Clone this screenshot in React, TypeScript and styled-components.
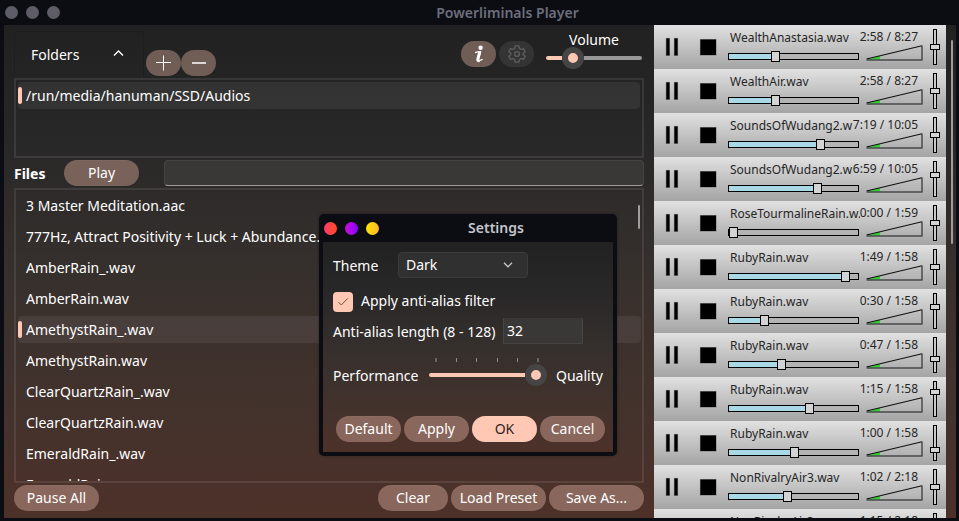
import React from "react";
import styled, { createGlobalStyle, css } from "styled-components";

const GlobalStyle = createGlobalStyle`
  * { box-sizing: border-box; }
  html, body { margin: 0; padding: 0; background: #0b0d13; overflow: hidden; }
  body { font-family: "Noto Sans", "Open Sans", sans-serif; font-size: 14px; font-weight: 450; color: #fff; }
`;

const Window = styled.div`
  position: relative;
  width: 959px;
  height: 521px;
  overflow: hidden;
  background: #0b0d13;
  display: flex;
  flex-direction: column;
`;

const TitleBar = styled.header<{ $height: number }>`
  height: ${(p) => p.$height}px;
  flex: none;
  display: grid;
  grid-template-columns: 60px 1fr 60px;
  align-items: center;
  padding: 0 5px;
`;

const Dots = styled.div`
  display: flex;
  gap: 8px;
`;

const Dot = styled.span<{ $fill: string }>`
  width: 13px;
  height: 13px;
  border-radius: 50%;
  background: ${(p) => p.$fill};
`;

const Title = styled.h1<{ $color: string; $spacing: number; $shift: number }>`
  margin: 0;
  padding-left: ${(p) => p.$shift}px;
  text-align: center;
  font-size: 14px;
  line-height: 18px;
  font-weight: 600;
  letter-spacing: ${(p) => p.$spacing}px;
  color: ${(p) => p.$color};
  white-space: nowrap;
`;

const Body = styled.main`
  height: 493px;
  margin: 0 3px 0 4px;
  display: flex;
  background: linear-gradient(#212121 0%, #292828 25%, #36302d 50%, #43322c 78%, #4d3129 100%);
`;

const Left = styled.section`
  width: 650px;
  padding: 6px 10px 0;
  display: flex;
  flex-direction: column;
`;

const TopRow = styled.div`
  height: 47px;
  flex: none;
  display: flex;
`;

const FolderCombo = styled.div`
  width: 130px;
  height: 47px;
  padding: 0 19px 1px 16px;
  display: flex;
  align-items: center;
  justify-content: space-between;
  border: 1px solid #1e1e1e;
  border-bottom: 0;
  border-radius: 4px 4px 0 0;
  svg { margin-top: -3px; }
`;

const pill = css`
  height: 26px;
  border-radius: 13px;
  display: flex;
  align-items: center;
  justify-content: center;
  flex: none;
  padding: 0;
  border: 0;
  color: #fff;
  font: inherit;
  line-height: 20px;
  white-space: nowrap;
`;

const IconButton = styled.button<{ $off?: boolean }>`
  ${pill}
  width: 35px;
  background: ${(p) => (p.$off ? "#343434" : "#705d56")};
`;

const FolderActions = styled.div`
  display: flex;
  padding: 19px 0 0 2px;
`;

const TopActions = styled.div`
  display: flex;
  gap: 3px;
  margin-left: auto;
  padding-top: 10px;
`;

const Volume = styled.div`
  width: 96px;
  margin: 0 2px 0 12px;
  display: flex;
  flex-direction: column;
  align-items: center;
`;

const VolumeLabel = styled.span`
  height: 16px;
  line-height: 17px;
`;

const RoundSlider = styled.div<{ $width: number }>`
  width: ${(p) => p.$width}px;
  height: 22px;
  flex: none;
  display: flex;
  align-items: center;
`;

const SliderRun = styled.span<{ $width: number; $on?: boolean }>`
  width: ${(p) => p.$width}px;
  height: 4px;
  background: ${(p) => (p.$on ? "#ffc8b4" : "#989898")};
  border-radius: ${(p) => (p.$on ? "2px 0 0 2px" : "0 2px 2px 0")};
`;

const Knob = styled.span`
  width: 22px;
  height: 22px;
  border-radius: 50%;
  border: 6px solid #454545;
  background: #ffc8b4;
  flex: none;
`;

const ListBox = styled.div<{ $height: number }>`
  height: ${(p) => p.$height}px;
  flex: none;
  border: 2px solid rgba(255, 255, 255, 0.09);
  padding: 2px 2px 0;
  overflow: hidden;
  display: flex;
`;

const Items = styled.div`
  flex: 1;
  display: flex;
  flex-direction: column;
  gap: 4px;
`;

const Item = styled.div<{ $active?: boolean }>`
  height: 27px;
  flex: none;
  display: flex;
  align-items: center;
  gap: 4px;
  border-radius: 4px;
  line-height: 27px;
  background: ${(p) => (p.$active ? "rgba(255,255,255,0.065)" : "transparent")};
  &::before {
    content: "";
    width: 4px;
    height: 17px;
    border-radius: 2px;
    background: ${(p) => (p.$active ? "#ffc8b4" : "transparent")};
  }
`;

const ScrollThumb = styled.span<{ $height: number; $top: number; $left: number }>`
  width: 2px;
  height: ${(p) => p.$height}px;
  margin: ${(p) => p.$top}px 0 0 ${(p) => p.$left}px;
  border-radius: 1px;
  background: #a09c9a;
`;

const FilesRow = styled.div`
  height: 30px;
  flex: none;
  display: flex;
  align-items: center;
`;

const FilesLabel = styled.strong`
  width: 50px;
  font-weight: 700;
`;

const Button = styled.button<{ $width: number; $tone?: string; $ink?: string }>`
  ${pill}
  width: ${(p) => p.$width}px;
  background: ${(p) => p.$tone || "#8a675c"};
  color: ${(p) => p.$ink || "#fff"};
  box-shadow: inset 0 1px rgba(255, 255, 255, 0.04);
`;

const Search = styled.div`
  height: 26px;
  flex: 1;
  margin-left: 25px;
  border-radius: 4px;
  border: 1px solid #454342;
  border-bottom-color: #a09e9d;
  background: #3a3837;
`;

const BottomRow = styled.div`
  display: flex;
  gap: 3px;
  margin-top: 2px;
`;

const Spacer = styled.span`
  flex: 1;
`;

const Tracks = styled.section`
  width: 292px;
  overflow: hidden;
`;

const Track = styled.div`
  height: 44px;
  display: grid;
  grid-template-columns: 74px 132px 64px 22px;
  background: linear-gradient(#e1e1e1, #a4a4a4);
`;

const Transport = styled.div`
  padding: 12px 0 0 11px;
`;

const NameCell = styled.div`
  min-width: 0;
`;

const trackText = css`
  height: 27px;
  font-size: 12px;
  line-height: 25px;
  font-weight: 400;
  color: #262626;
  white-space: nowrap;
`;

const TrackName = styled.div`
  ${trackText}
  width: 132px;
  padding-left: 2px;
  overflow: hidden;
`;

const TimeCell = styled.div`
  display: flex;
  flex-direction: column;
  align-items: flex-end;
`;

const TrackTime = styled.div`
  ${trackText}
  height: 20px;
  line-height: 23px;
  padding-right: 6px;
`;

const SeekBar = styled.div`
  width: 131px;
  height: 7px;
  margin-top: 1px;
  border: 1px solid #000;
  background: #b4b4b4;
  display: flex;
  align-items: center;
`;

const SeekFill = styled.span`
  height: 5px;
  background: #a9d8e6;
  flex: none;
`;

const SeekThumb = styled.span`
  width: 9px;
  height: 11px;
  border: 1px solid #000;
  background: #d3d3d3;
  flex: none;
`;

const Gain = styled.div`
  width: 4px;
  height: 36px;
  margin: 4px 0 0 9px;
  border: 1px solid #000;
  background: #c8c8c8;
  display: flex;
  flex-direction: column;
  align-items: center;
`;

const GainThumb = styled.span`
  width: 10px;
  height: 6px;
  flex: none;
  border: 1px solid #000;
  background: #d3d3d3;
`;

const Dialog = styled.div`
  position: absolute;
  left: 319px;
  top: 214px;
  width: 298px;
  height: 242px;
  border-radius: 5px;
  background: #0b0d13;
  box-shadow: 0 0 3px rgba(0, 0, 0, 0.35);
`;

const DialogBody = styled.div`
  height: 210px;
  margin: 0 4px;
  padding: 10px 8px 0 10px;
  background: linear-gradient(#222 0%, #292828 25%, #36302d 52%, #43322c 80%, #4d3129 100%);
`;

const Field = styled.div<{ $height: number; $top?: number }>`
  height: ${(p) => p.$height}px;
  margin-top: ${(p) => p.$top || 0}px;
  display: flex;
  align-items: center;
  white-space: nowrap;
`;

const FieldLabel = styled.label<{ $width: number; $up?: number }>`
  width: ${(p) => p.$width}px;
  flex: none;
  padding-bottom: ${(p) => p.$up || 0}px;
`;

const Select = styled.div`
  width: 130px;
  height: 26px;
  padding: 0 14px 1px 7px;
  border: 1px solid #3b3b3b;
  border-radius: 4px;
  background: #303030;
  display: flex;
  align-items: center;
  justify-content: space-between;
`;

const CheckBox = styled.span`
  width: 20px;
  height: 20px;
  margin-right: 8px;
  border-radius: 4px;
  background: #ffc8b4;
  display: flex;
  align-items: center;
  justify-content: center;
`;

const NumberInput = styled.div`
  width: 80px;
  height: 26px;
  padding: 0 3px;
  line-height: 24px;
  border: 1px solid #484645;
  border-top-color: #3a3837;
  border-bottom-color: #454241;
  background: #3a3837;
`;

const Ticks = styled.div`
  width: 104px;
  height: 4px;
  margin: 14px 0 0 102px;
  display: flex;
  justify-content: space-between;
`;

const Tick = styled.i<{ $wide?: boolean }>`
  width: ${(p) => (p.$wide ? 2 : 1)}px;
  height: 4px;
  background: ${(p) => (p.$wide ? "#686462" : "#908c8a")};
`;

const DialogButtons = styled.div`
  display: flex;
  gap: 3px;
  margin: 30px 0 0 3px;
`;

const tracks = [
  { name: "WealthAnastasia.wav", time: "2:58 / 8:27", seek: 43, gain: 19 },
  { name: "WealthAir.wav", time: "2:58 / 8:27", seek: 43, gain: 19 },
  { name: "SoundsOfWudang2.w", time: "7:19 / 10:05", seek: 88, gain: 19 },
  { name: "SoundsOfWudang2.w", time: "6:59 / 10:05", seek: 85, gain: 15 },
  { name: "RoseTourmalineRain.w.", time: "0:00 / 1:59", seek: 1, gain: 19 },
  { name: "RubyRain.wav", time: "1:49 / 1:58", seek: 113, gain: 19 },
  { name: "RubyRain.wav", time: "0:30 / 1:58", seek: 32, gain: 15 },
  { name: "RubyRain.wav", time: "0:47 / 1:58", seek: 49, gain: 23 },
  { name: "RubyRain.wav", time: "1:15 / 1:58", seek: 77, gain: 12 },
  { name: "RubyRain.wav", time: "1:00 / 1:58", seek: 62, gain: 26 },
  { name: "NonRivalryAir3.wav", time: "1:02 / 2:18", seek: 55, gain: 19 },
  { name: "NonRivalryAir3.wav", time: "1:15 / 2:18", seek: 70, gain: 19 },
];

const files = [
  "3 Master Meditation.aac",
  "777Hz, Attract Positivity + Luck + Abundance.aac",
  "AmberRain_.wav",
  "AmberRain.wav",
  "AmethystRain_.wav",
  "AmethystRain.wav",
  "ClearQuartzRain_.wav",
  "ClearQuartzRain.wav",
  "EmeraldRain_.wav",
  "EmeraldRain.wav",
];

function TrackRow({ name, time, seek, gain }: (typeof tracks)[number]) {
  return (
    <Track>
      <Transport>
        <svg width="52" height="20" viewBox="0 0 52 20">
          <g fill="#000" stroke="#000" strokeOpacity="0.35">
            <rect x="1.3" y="1.4" width="3.2" height="17" />
            <rect x="9.4" y="1.4" width="3.2" height="17" />
            <rect x="35.4" y="2.5" width="15.6" height="15.5" />
          </g>
        </svg>
      </Transport>
      <NameCell>
        <TrackName>{name}</TrackName>
        <SeekBar>
          <SeekFill style={{ width: Math.max(0, seek - 1) }} />
          <SeekThumb />
        </SeekBar>
      </NameCell>
      <TimeCell>
        <TrackTime>{time}</TrackTime>
        <svg width="58" height="16" viewBox="0 0 58 16">
          <path d="M0.5 14.8 L14 10.8 V14.8 Z" fill="#32cd32" />
          <path d="M0.5 14 L56 0.7" stroke="#111" strokeWidth="1.1" fill="none" />
          <path d="M56 0.5 V15" stroke="#444" strokeWidth="1.4" fill="none" />
          <path d="M0.5 15.1 H56.5" stroke="#4a4a4a" strokeWidth="1.5" fill="none" />
        </svg>
      </TimeCell>
      <Gain>
        <GainThumb style={{ marginTop: gain - 5 }} />
      </Gain>
    </Track>
  );
}

export default function App() {
  return (
    <>
      <GlobalStyle />
      <Window>
        <TitleBar $height={25}>
          <Dots>
            <Dot $fill="#5e5d67" />
            <Dot $fill="#5e5d67" />
            <Dot $fill="#5e5d67" />
          </Dots>
          <Title $color="#6c6e7c" $spacing={0} $shift={56}>Powerliminals Player</Title>
        </TitleBar>
        <Body>
          <Left>
            <TopRow>
              <FolderCombo>
                Folders
                <svg width="11" height="7" viewBox="0 0 11 7" fill="none" stroke="#fff" strokeWidth="1.4">
                  <path d="M1 5.6 L5.5 1.1 L10 5.6" />
                </svg>
              </FolderCombo>
              <FolderActions>
                <IconButton aria-label="Add folder">
                  <svg width="17" height="16" viewBox="0 0 17 16" stroke="#fff" strokeWidth="1">
                    <path d="M8.5 0.5 V15.5 M1 7.5 H16" />
                  </svg>
                </IconButton>
                <IconButton aria-label="Remove folder">
                  <svg width="17" height="16" viewBox="0 0 17 16" stroke="#ddd8d6" strokeWidth="2">
                    <path d="M2 8 H16" />
                  </svg>
                </IconButton>
              </FolderActions>
              <TopActions>
                <IconButton aria-label="About">
                  <svg width="12" height="18" viewBox="0 0 12 18" fill="none" stroke="#fff">
                    <circle cx="7.6" cy="2.8" r="2.2" fill="#fff" stroke="none" />
                    <path d="M2 7.6 C4 6.8 5.5 6.6 7.6 6.6 L5.4 14.2 C5.1 15.8 7 15.8 9.6 14.2" strokeWidth="1.2" />
                    <path d="M6.8 7 L4.8 14.2 C4.5 15.6 5.4 15.9 6.6 15.6" strokeWidth="3" />
                  </svg>
                </IconButton>
                <IconButton $off aria-label="Settings">
                  <svg width="18" height="18" viewBox="0 0 18 18" fill="none" stroke="#5d5d5d" strokeWidth="1.4" strokeLinejoin="round">
                    <path d="M7.2 0.9 H10.8 L11.4 3.5 L13 4.4 L15.4 3.6 L17.2 6.7 L15.2 8.3 V9.7 L17.2 11.3 L15.4 14.4 L13 13.6 L11.4 14.5 L10.8 17.1 H7.2 L6.6 14.5 L5 13.6 L2.6 14.4 L0.8 11.3 L2.8 9.7 V8.3 L0.8 6.7 L2.6 3.6 L5 4.4 L6.6 3.5 Z" />
                    <circle cx="9" cy="9" r="2.4" />
                  </svg>
                </IconButton>
              </TopActions>
              <Volume>
                <VolumeLabel>Volume</VolumeLabel>
                <RoundSlider $width={96}>
                  <SliderRun $width={16} $on />
                  <Knob />
                  <SliderRun $width={58} />
                </RoundSlider>
              </Volume>
            </TopRow>
            <ListBox $height={80}>
              <Items>
                <Item $active>/run/media/hanuman/SSD/Audios</Item>
              </Items>
            </ListBox>
            <FilesRow>
              <FilesLabel>Files</FilesLabel>
              <Button $width={75} $tone="#79625a">Play</Button>
              <Search />
            </FilesRow>
            <ListBox $height={295}>
              <Items>
                {files.map((f) => (
                  <Item key={f} $active={f === "AmethystRain_.wav"}>{f}</Item>
                ))}
              </Items>
              <ScrollThumb $height={24} $top={13} $left={-3} />
            </ListBox>
            <BottomRow>
              <Button $width={85}>Pause All</Button>
              <Spacer />
              <Button $width={70}>Clear</Button>
              <Button $width={95}>Load Preset</Button>
              <Button $width={95}>Save As...</Button>
            </BottomRow>
          </Left>
          <Tracks>
            {tracks.map((t, i) => (
              <TrackRow key={i} {...t} />
            ))}
          </Tracks>
          <ScrollThumb $height={204} $top={15} $left={5} />
        </Body>
        <Dialog role="dialog" aria-label="Settings">
          <TitleBar $height={28}>
            <Dots>
              <Dot $fill="linear-gradient(90deg, #ff3d6e, #ff4b22)" />
              <Dot $fill="linear-gradient(90deg, #c80fd8, #8a00ff)" />
              <Dot $fill="linear-gradient(90deg, #ffe600, #ffb52e)" />
            </Dots>
            <Title $color="#c3c5cb" $spacing={0} $shift={56}>Settings</Title>
          </TitleBar>
          <DialogBody>
            <Field $height={26}>
              <FieldLabel $width={65}>Theme</FieldLabel>
              <Select>
                Dark
                <svg width="10" height="6" viewBox="0 0 10 6" fill="none" stroke="#c8c8c8" strokeWidth="1.3">
                  <path d="M1 0.8 L5 4.8 L9 0.8" />
                </svg>
              </Select>
            </Field>
            <Field $height={20} $top={14}>
              <CheckBox>
                <svg width="12" height="10" viewBox="0 0 12 10" fill="none" stroke="#6e4d42" strokeWidth="1">
                  <path d="M1.5 5.2 L4.3 8 L10.8 1.4" />
                </svg>
              </CheckBox>
              <FieldLabel $width={140} $up={3}>Apply anti-alias filter</FieldLabel>
            </Field>
            <Field $height={26} $top={6}>
              <FieldLabel $width={170}>Anti-alias length (8 - 128)</FieldLabel>
              <NumberInput>32</NumberInput>
            </Field>
            <Ticks>
              <Tick $wide />
              <Tick />
              <Tick />
              <Tick />
              <Tick />
              <Tick $wide />
            </Ticks>
            <Field $height={22} $top={2}>
              <FieldLabel $width={96}>Performance</FieldLabel>
              <RoundSlider $width={127}>
                <SliderRun $width={96} $on />
                <Knob />
              </RoundSlider>
              <FieldLabel $width={50}>Quality</FieldLabel>
            </Field>
            <DialogButtons>
              <Button $width={65}>Default</Button>
              <Button $width={65}>Apply</Button>
              <Button $width={65} $tone="#ffc8b4" $ink="#33231d">OK</Button>
              <Button $width={65}>Cancel</Button>
            </DialogButtons>
          </DialogBody>
        </Dialog>
      </Window>
    </>
  );
}
